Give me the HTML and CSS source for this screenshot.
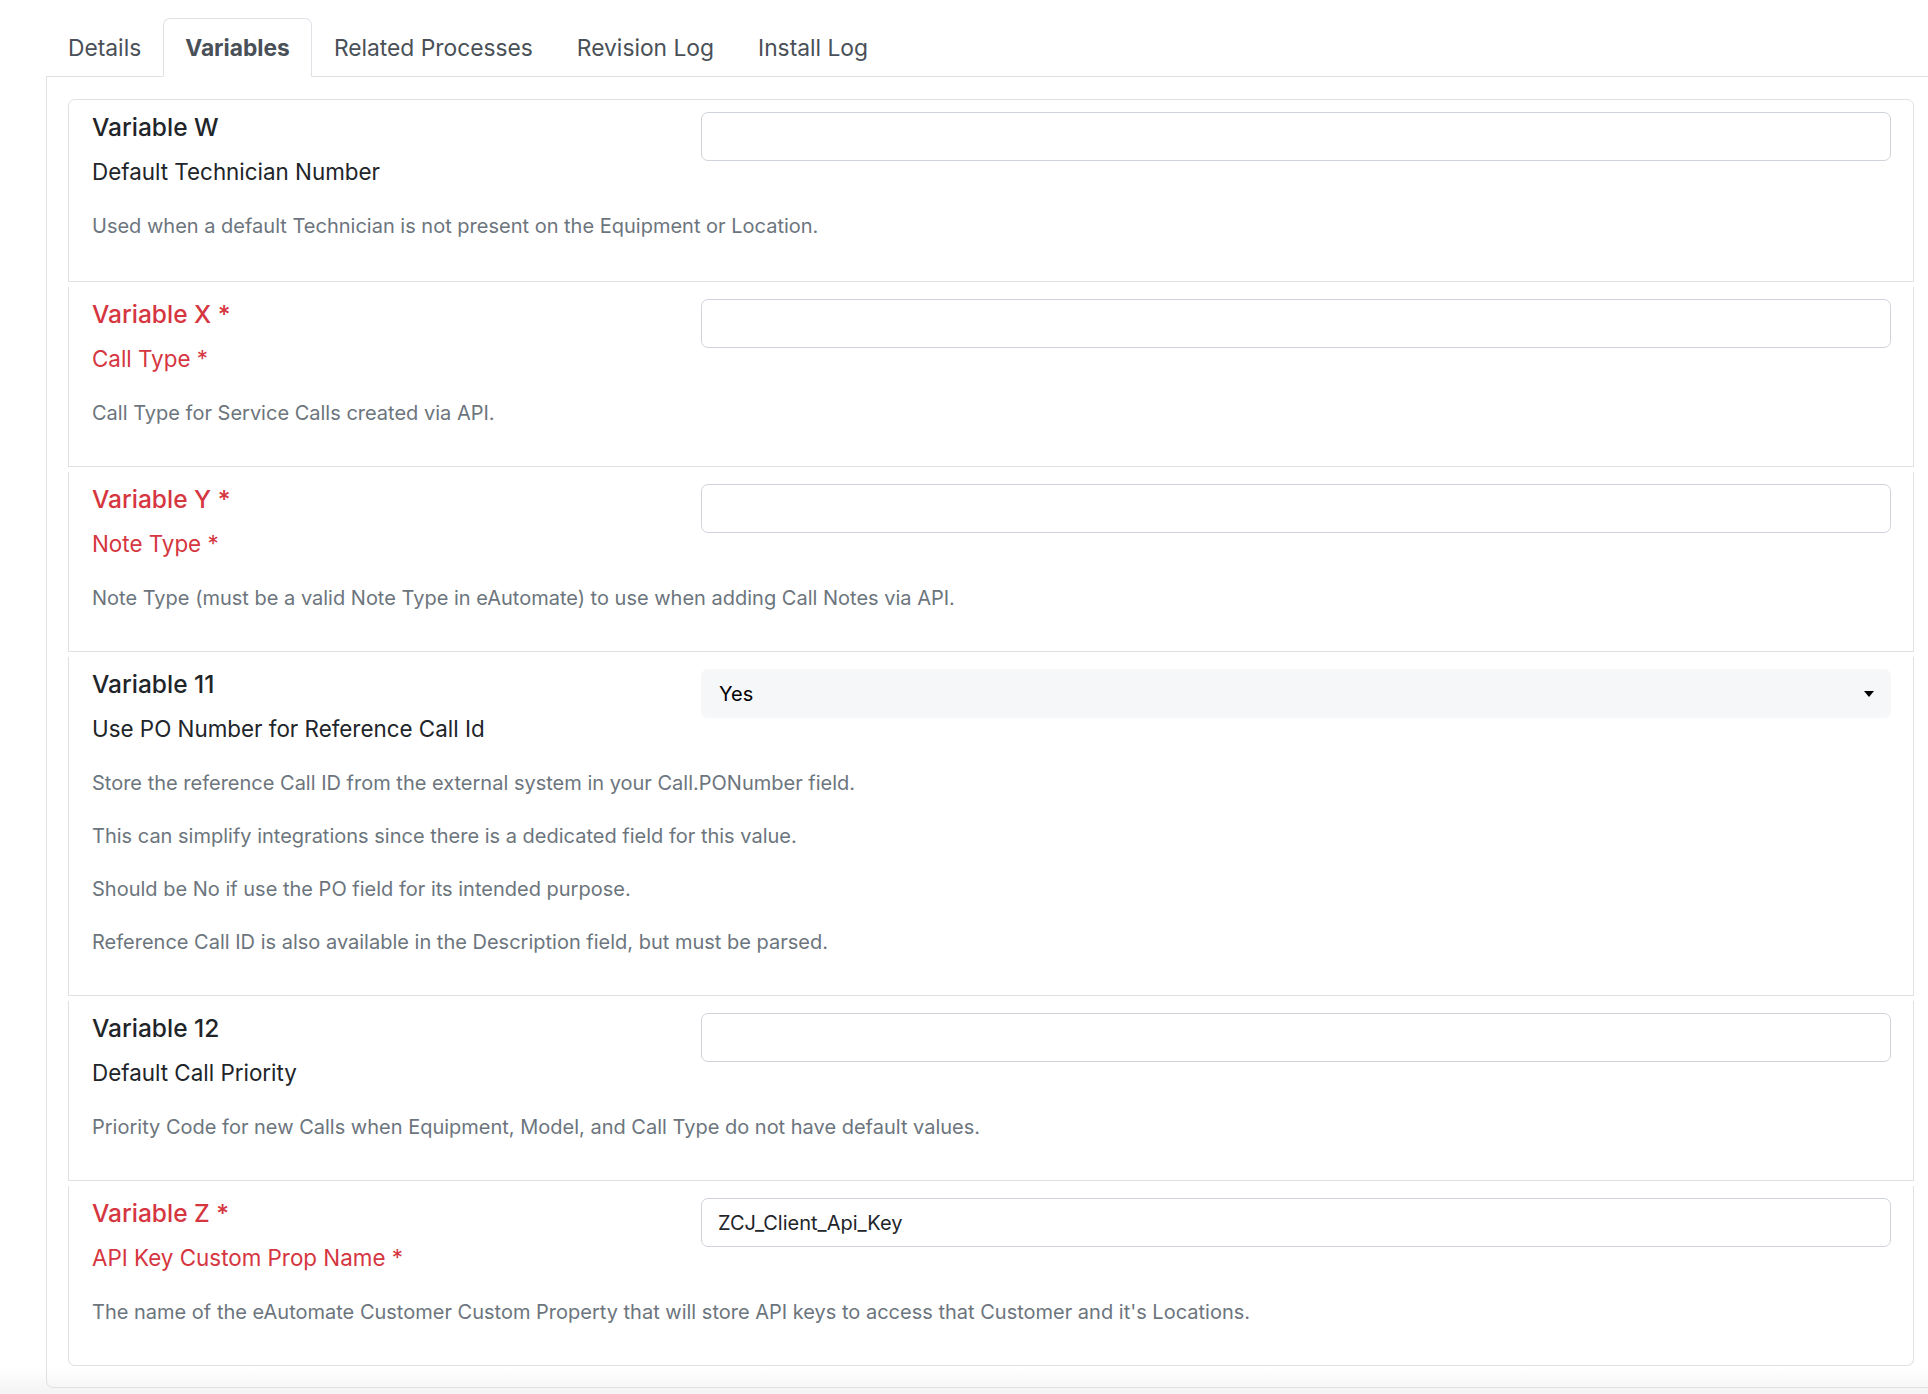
FILE: index.html
```html
<!DOCTYPE html>
<html lang="en">

<head>
  <meta charset="UTF-8">
  <meta name="viewport" content="width=device-width, initial-scale=1.0">
  <title>Process Variables</title>
  <link rel="stylesheet" href="styles.css">
</head>

<body>
  <div class="page">
    <ul class="tabs">
      <li class="tab">Details</li>
      <li class="tab active">Variables</li>
      <li class="tab">Related Processes</li>
      <li class="tab">Revision Log</li>
      <li class="tab">Install Log</li>
    </ul>

    <div class="panel">
      <div class="var-list">

        <div class="var-item">
          <div class="var-head">
            <div class="var-info">
              <h5 class="var-name">Variable W</h5>
              <div class="var-label">Default Technician Number</div>
            </div>
            <input type="text" class="field">
          </div>
          <p class="var-help">Used when a default Technician is not present on the Equipment or Location.</p>
        </div>

        <div class="var-item required">
          <div class="var-head">
            <div class="var-info">
              <h5 class="var-name">Variable X *</h5>
              <div class="var-label">Call Type *</div>
            </div>
            <input type="text" class="field">
          </div>
          <p class="var-help">Call Type for Service Calls created via API.</p>
        </div>

        <div class="var-item required">
          <div class="var-head">
            <div class="var-info">
              <h5 class="var-name">Variable Y *</h5>
              <div class="var-label">Note Type *</div>
            </div>
            <input type="text" class="field">
          </div>
          <p class="var-help">Note Type (must be a valid Note Type in eAutomate) to use when adding Call Notes via API.</p>
        </div>

        <div class="var-item">
          <div class="var-head">
            <div class="var-info">
              <h5 class="var-name">Variable 11</h5>
              <div class="var-label">Use PO Number for Reference Call Id</div>
            </div>
            <div class="select">
              <span>Yes</span>
              <span class="caret"></span>
            </div>
          </div>
          <p class="var-help">Store the reference Call ID from the external system in your Call.PONumber field.</p>
          <p class="var-help">This can simplify integrations since there is a dedicated field for this value.</p>
          <p class="var-help">Should be No if use the PO field for its intended purpose.</p>
          <p class="var-help">Reference Call ID is also available in the Description field, but must be parsed.</p>
        </div>

        <div class="var-item">
          <div class="var-head">
            <div class="var-info">
              <h5 class="var-name">Variable 12</h5>
              <div class="var-label">Default Call Priority</div>
            </div>
            <input type="text" class="field">
          </div>
          <p class="var-help">Priority Code for new Calls when Equipment, Model, and Call Type do not have default values.</p>
        </div>

        <div class="var-item required">
          <div class="var-head">
            <div class="var-info">
              <h5 class="var-name">Variable Z *</h5>
              <div class="var-label">API Key Custom Prop Name *</div>
            </div>
            <input type="text" class="field" value="ZCJ_Client_Api_Key">
          </div>
          <p class="var-help">The name of the eAutomate Customer Custom Property that will store API keys to access that Customer and it's Locations.</p>
        </div>

      </div>
    </div>
  </div>
</body>

</html>
```

FILE: styles.css
```css
html {
  min-height: 100%;
  background: linear-gradient(to bottom, #fff calc(100% - 26px), #f3f3f3);
}

body {
  margin: 0;
  overflow: hidden;
  font-family: Inter, "Liberation Sans", sans-serif;
  color: #212529;
}

.page {
  padding: 18px 0 0 46px;
  margin-right: -8px;
}

/* tabs */
.tabs {
  list-style: none;
  margin: 0;
  padding: 0;
  display: flex;
  border-bottom: 1px solid #dee2e6;
}

.tab {
  padding: 13px 21px;
  font-size: 22.8px;
  line-height: 31px;
  color: #495057;
  border: 1px solid transparent;
  border-top-left-radius: 7px;
  border-top-right-radius: 7px;
  margin-bottom: -1px;
}

.tab.active {
  font-weight: 700;
  background: #fff;
  border-color: #dee2e6 #dee2e6 #fff;
}

/* content panel */
.panel {
  border: 1px solid #dee2e6;
  border-top: 0;
  border-bottom-left-radius: 7px;
  padding: 22px 21px 21px 21px;
}

.var-item {
  padding: 12px 22px 16px 23px;
  background: #fff;
  border: 1px solid #dee2e6;
  border-top: 0;
  margin-bottom: 5px;
}

.var-item:first-child {
  padding-bottom: 18px;
  border-top: 1px solid #dee2e6;
  border-top-left-radius: 7px;
  border-top-right-radius: 7px;
}

.var-item:last-child {
  margin-bottom: 0;
  border-bottom-left-radius: 7px;
  border-bottom-right-radius: 7px;
}

.var-head {
  display: grid;
  grid-template-columns: 609px 1fr;
  align-items: start;
  margin-bottom: 24px;
}

.var-name {
  margin: 0 0 15px;
  font-size: 24.5px;
  line-height: 30px;
  font-weight: 500;
}

.var-label {
  font-size: 22.4px;
  line-height: 30px;
}

.var-help {
  margin: 0 0 23px;
  font-size: 20px;
  line-height: 30px;
  color: #6c757d;
}

.var-help:last-child {
  margin-bottom: 22px;
}

.required .var-name,
.required .var-label {
  color: #d5363f;
}

/* inputs */
.field {
  display: block;
  width: 100%;
  box-sizing: border-box;
  height: 49px;
  padding: 0 16px;
  font-family: inherit;
  font-size: 20px;
  color: #212529;
  border: 1px solid #ced4da;
  border-radius: 7px;
  background: #fff;
  outline: none;
}

.select {
  height: 49px;
  box-sizing: border-box;
  padding: 0 17px 0 18px;
  display: flex;
  align-items: center;
  justify-content: space-between;
  font-size: 20px;
  color: #000;
  background: #f6f7f9;
  border-radius: 7px;
}

.caret {
  width: 0;
  height: 0;
  border-left: 5px solid transparent;
  border-right: 5px solid transparent;
  border-top: 6px solid #000;
}
```
